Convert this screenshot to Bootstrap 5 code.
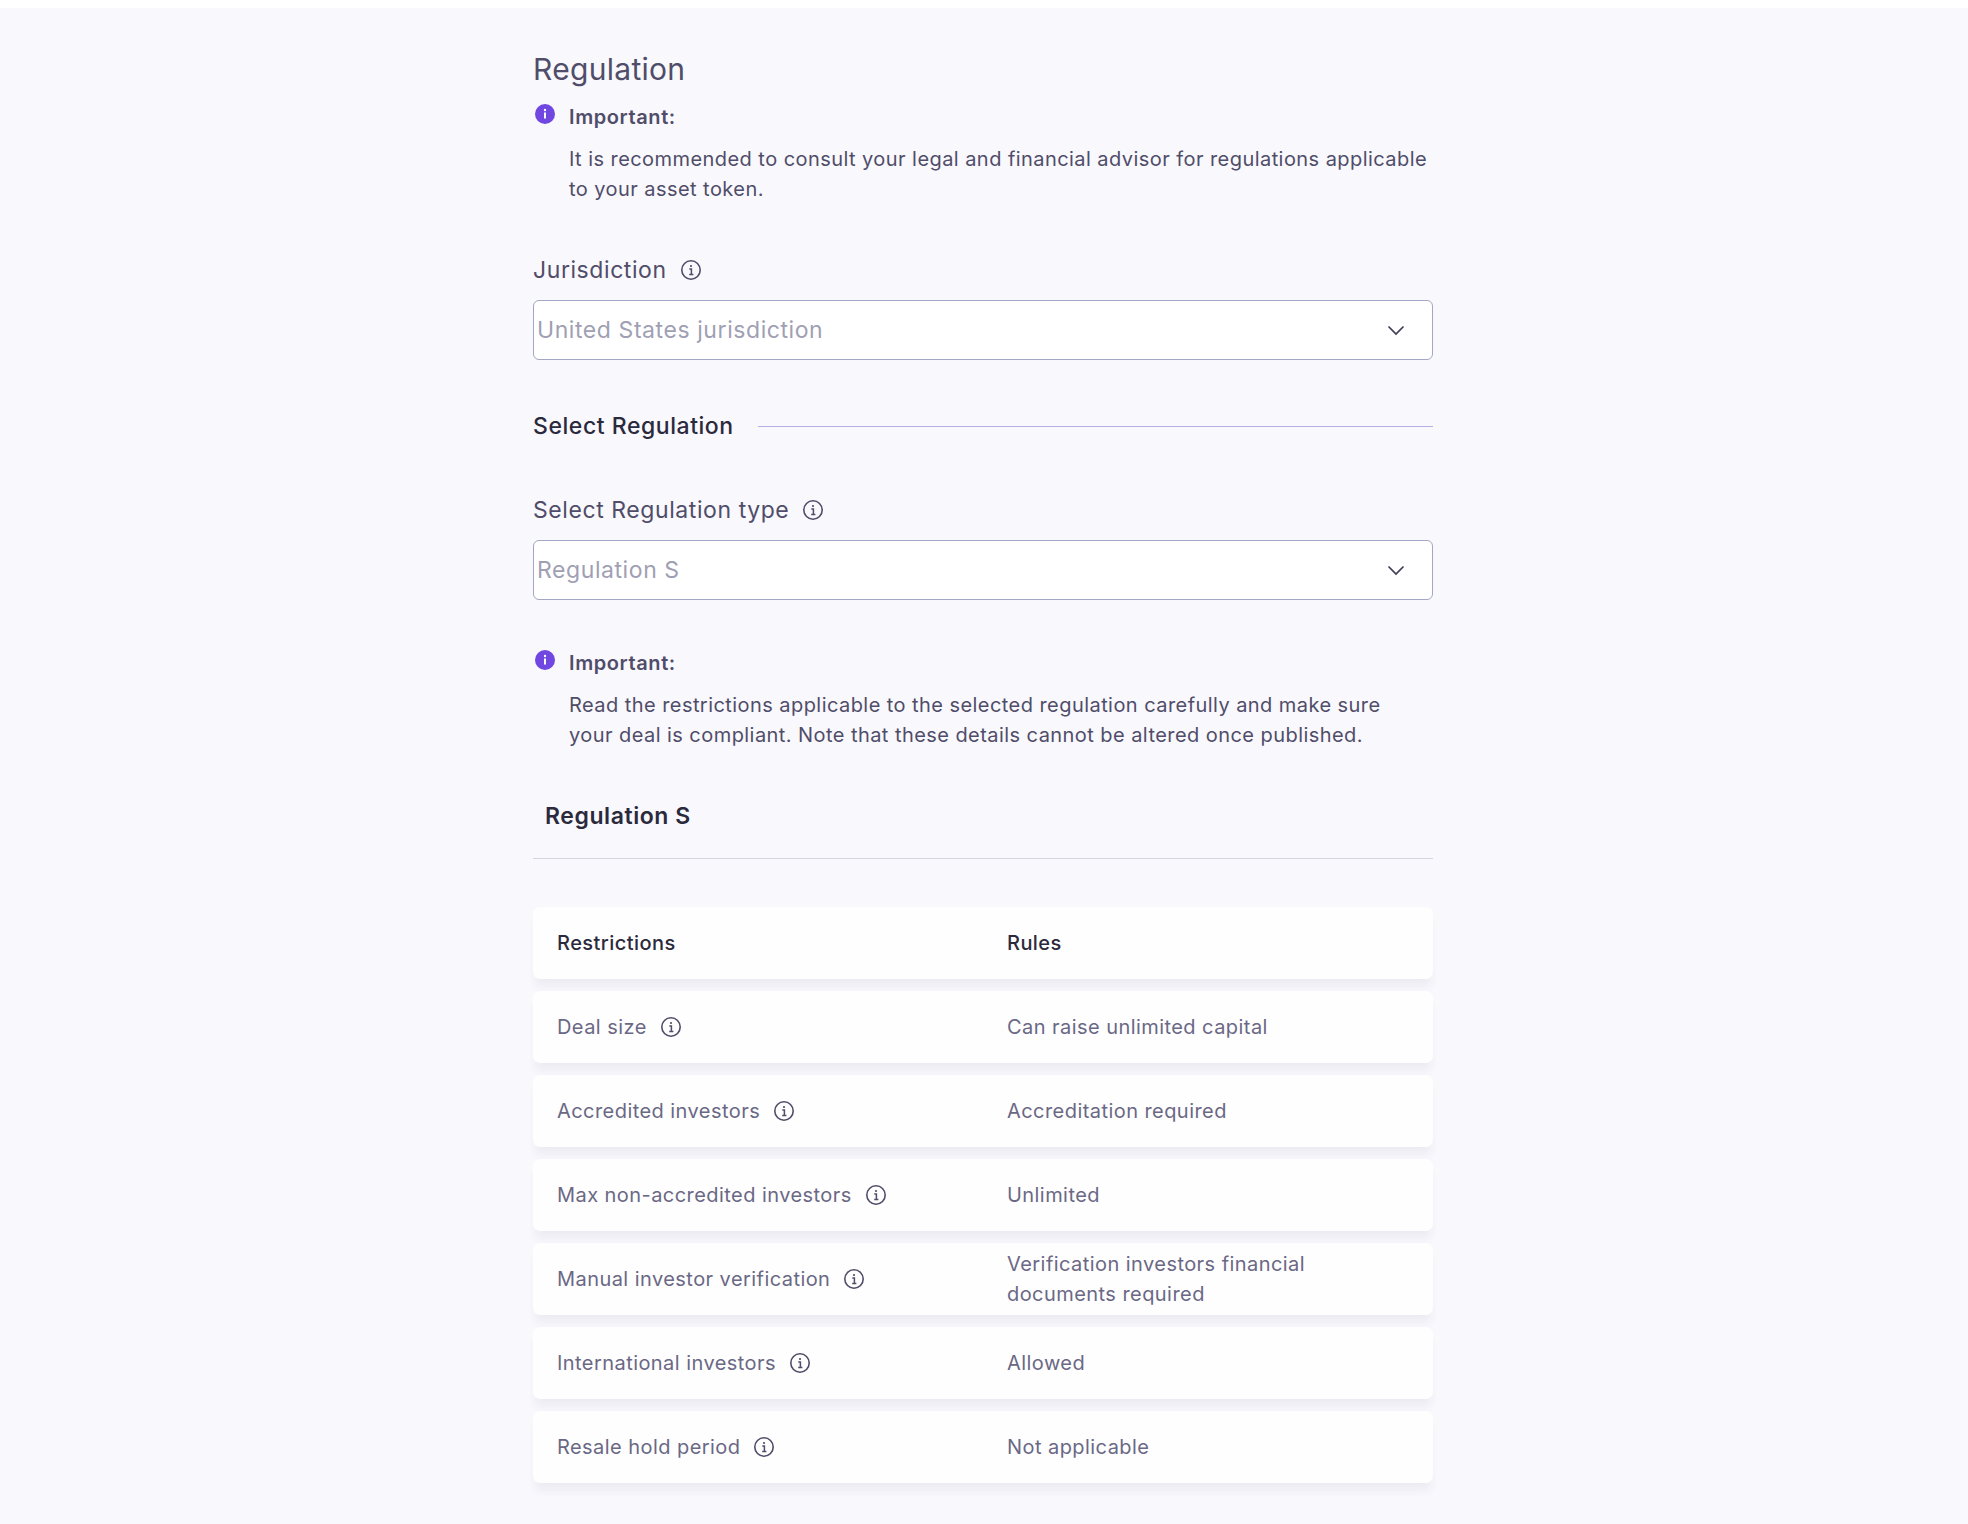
<!DOCTYPE html>
<html lang="en">
<head>
  <meta charset="UTF-8">
  <title>Regulation</title>
  <link href="https://cdn.jsdelivr.net/npm/bootstrap@5.3.3/dist/css/bootstrap.min.css" rel="stylesheet">
  <script src="https://cdn.jsdelivr.net/npm/bootstrap@5.3.3/dist/js/bootstrap.bundle.min.js"></script>
  <style>
    html, body { height: 100%; }
    body {
      background-color: #fff;
      font-family: Inter, "Liberation Sans", sans-serif;
      color: #4f4d69;
      font-size: 20px;
      line-height: 30px;
      letter-spacing: .022em;
    }
    .page-bg {
      margin-top: 8px;
      background-color: #f9f8fd;
      min-height: 1516px;
      padding-top: 36px;
    }
    .form-wrap { width: 900px; margin-left: 533px; }
    .page-title { font-size: 30px; line-height: 50px; font-weight: 400; letter-spacing: .3px; color: #4f4d69; margin: 0 0 8px; }
    .note-box { display: flex; gap: 14px; padding: 0 4px 0 2px; }
    .note-icon { flex: 0 0 20px; width: 20px; height: 20px; margin-top: 2px; }
    .note-head { font-weight: 600; line-height: 30px; margin-bottom: 12px; letter-spacing: .03em; }
    .field-label { display: flex; align-items: center; gap: 13px; font-size: 23px; line-height: 32px; margin-bottom: 14px; letter-spacing: .025em; }
    .info-icon { width: 22px; height: 22px; flex: none; }
    .fake-select {
      height: 60px;
      background: #fff;
      border: 1px solid #a3a6c4;
      border-radius: 6px;
      padding: 0 27px 0 3px;
      font-size: 23px;
      letter-spacing: .025em;
      color: #a09fb4;
    }
    .sect-title { font-size: 23px; line-height: 32px; font-weight: 500; letter-spacing: .024em; color: #2b2a3d; white-space: nowrap; }
    .sect-line { height: 1px; background: #b9aee6; flex-grow: 1; }
    .reg-title { font-size: 23px; line-height: 32px; font-weight: 600; letter-spacing: .025em; color: #2b2a3d; padding-left: 12px; }
    .reg-line { height: 1px; background: #d5d5e0; margin-top: 26px; }
    .rule-row {
      min-height: 72px;
      background: #fefefe;
      border-radius: 7px;
      box-shadow: 0 10px 8px -2px rgba(50, 50, 80, .06);
      color: #6a6885;
    }
    .rule-row > div { padding: 0 24px; display: flex; align-items: center; gap: 13px; }
    .rule-head { color: #2b2a3d; font-weight: 500; }
    .gap-sect { gap: 24px; }
    .gap-rows { gap: 12px; }
    .space-a { margin-top: 50px; }
    .space-b { margin-top: 50px; }
    .space-c { margin-top: 52px; }
    .space-d { margin-top: 48px; }
    .space-e { margin-top: 50px; }
    .space-f { margin-top: 48px; }
  </style>
</head>
<body>

  <svg class="d-none">
    <symbol id="i-outline" viewBox="0 0 22 22">
      <circle cx="11" cy="11" r="9.2" fill="none" stroke="#4f4d69" stroke-width="1.6"/>
      <path d="M9.3 10h2.1v5.6M9.2 15.6h4.2" fill="none" stroke="#4f4d69" stroke-width="1.5"/>
      <circle cx="11" cy="7" r="1.1" fill="#4f4d69"/>
    </symbol>
  </svg>

  <div class="page-bg">
    <div class="form-wrap">
      <h1 class="page-title">Regulation</h1>

      <div class="note-box">
        <svg class="note-icon" viewBox="0 0 20 20"><circle cx="10" cy="10" r="10" fill="#7047e0"/><circle cx="10" cy="6" r="1.2" fill="#fff"/><rect x="9" y="8.5" width="2" height="6" fill="#fff"/></svg>
        <div>
          <div class="note-head">Important:</div>
          <div>It is recommended to consult your legal and financial advisor for regulations applicable to your asset token.</div>
        </div>
      </div>

      <div class="field-label space-a"><span>Jurisdiction</span><svg class="info-icon"><use href="#i-outline"/></svg></div>
      <div class="fake-select d-flex align-items-center justify-content-between">
        <span>United States jurisdiction</span>
        <svg width="18" height="11" viewBox="0 0 18 11"><path d="M1.5 1.5 9 9l7.5-7.5" fill="none" stroke="#3f3d56" stroke-width="1.7"/></svg>
      </div>

      <div class="d-flex align-items-center gap-sect space-b">
        <span class="sect-title">Select Regulation</span>
        <div class="sect-line"></div>
      </div>

      <div class="field-label space-c"><span>Select Regulation type</span><svg class="info-icon"><use href="#i-outline"/></svg></div>
      <div class="fake-select d-flex align-items-center justify-content-between">
        <span>Regulation S</span>
        <svg width="18" height="11" viewBox="0 0 18 11"><path d="M1.5 1.5 9 9l7.5-7.5" fill="none" stroke="#3f3d56" stroke-width="1.7"/></svg>
      </div>

      <div class="note-box space-d">
        <svg class="note-icon" viewBox="0 0 20 20"><circle cx="10" cy="10" r="10" fill="#7047e0"/><circle cx="10" cy="6" r="1.2" fill="#fff"/><rect x="9" y="8.5" width="2" height="6" fill="#fff"/></svg>
        <div>
          <div class="note-head">Important:</div>
          <div>Read the restrictions applicable to the selected regulation carefully and make sure your deal is compliant. Note that these details cannot be altered once published.</div>
        </div>
      </div>

      <div class="reg-title space-e">Regulation S</div>
      <div class="reg-line"></div>

      <div class="d-flex flex-column gap-rows space-f">
        <div class="row g-0 rule-row rule-head"><div class="col-6">Restrictions</div><div class="col-6">Rules</div></div>
        <div class="row g-0 rule-row"><div class="col-6">Deal size <svg class="info-icon"><use href="#i-outline"/></svg></div><div class="col-6">Can raise unlimited capital</div></div>
        <div class="row g-0 rule-row"><div class="col-6">Accredited investors <svg class="info-icon"><use href="#i-outline"/></svg></div><div class="col-6">Accreditation required</div></div>
        <div class="row g-0 rule-row"><div class="col-6">Max non-accredited investors <svg class="info-icon"><use href="#i-outline"/></svg></div><div class="col-6">Unlimited</div></div>
        <div class="row g-0 rule-row"><div class="col-6">Manual investor verification <svg class="info-icon"><use href="#i-outline"/></svg></div><div class="col-6">Verification investors financial documents required</div></div>
        <div class="row g-0 rule-row"><div class="col-6">International investors <svg class="info-icon"><use href="#i-outline"/></svg></div><div class="col-6">Allowed</div></div>
        <div class="row g-0 rule-row"><div class="col-6">Resale hold period <svg class="info-icon"><use href="#i-outline"/></svg></div><div class="col-6">Not applicable</div></div>
      </div>
    </div>
  </div>

</body>
</html>
